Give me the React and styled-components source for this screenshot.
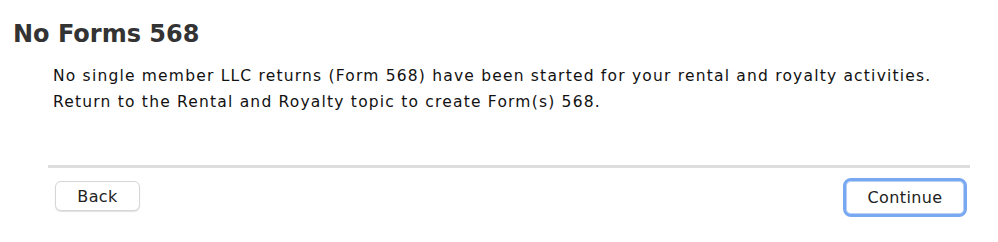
import React from 'react';
import styled, { createGlobalStyle } from 'styled-components';

const GlobalStyle = createGlobalStyle`
  html, body {
    margin: 0;
    padding: 0;
    background: #ffffff;
  }
  body {
    font-family: "DejaVu Sans", "Liberation Sans", sans-serif;
    color: #111;
  }
`;

const StyledPage = styled.main`
  width: 998px;
  height: 242px;
  box-sizing: border-box;
  padding: 20px 28px 0 13px;
  display: flex;
  flex-direction: column;
`;

const StyledTitle = styled.h1`
  margin: 0;
  font-size: 24px;
  line-height: 28px;
  font-weight: bold;
  color: #333;
`;

const StyledMessage = styled.p`
  margin: 15px 0 0 40px;
  font-size: 15.5px;
  letter-spacing: 1.2px;
  line-height: 26px;
  color: #111;
`;

const StyledFooter = styled.footer`
  margin: 50px 0 0 35px;
  border-top: 3px solid #dddddd;
  padding: 10px 3px 0 7px;
  display: flex;
  justify-content: space-between;
  align-items: flex-start;
`;

const StyledButton = styled.button`
  box-sizing: border-box;
  height: ${({ $primary }) => ($primary ? '39px' : '30px')};
  min-width: ${({ $primary }) => ($primary ? '124px' : '85px')};
  margin-top: ${({ $primary }) => ($primary ? '0' : '3px')};
  padding: 0 18px;
  font-family: "DejaVu Sans", "Liberation Sans", sans-serif;
  font-size: 16px;
  letter-spacing: 0.4px;
  color: #222;
  background: #fff;
  border: ${({ $primary }) => ($primary ? '3px solid #78a8f2' : '1px solid #d6d6d6')};
  border-radius: ${({ $primary }) => ($primary ? '8px' : '6px')};
  box-shadow: ${({ $primary }) =>
    $primary ? 'inset 0 0 0 1px #b9cff3' : '0 1px 1px rgba(0, 0, 0, 0.12)'};
  cursor: pointer;
`;

const App = () => {
  return (
    <>
      <GlobalStyle />
      <StyledPage>
        <StyledTitle>No Forms 568</StyledTitle>
        <StyledMessage>
          No single member LLC returns (Form 568) have been started for your rental and royalty activities.
          <br />
          Return to the Rental and Royalty topic to create Form(s) 568.
        </StyledMessage>
        <StyledFooter>
          <StyledButton>Back</StyledButton>
          <StyledButton $primary>Continue</StyledButton>
        </StyledFooter>
      </StyledPage>
    </>
  );
};

export default App;
